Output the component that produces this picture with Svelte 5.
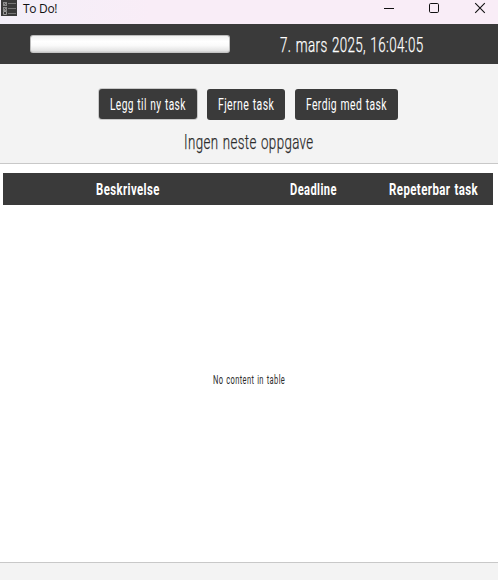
<script>
  const buttons = [
    { text: 'Legg til ny task', w: 76, box: 98, focused: true },
    { text: 'Fjerne task', w: 56, box: 78 },
    { text: 'Ferdig med task', w: 81, box: 103 }
  ];
  const columns = [
    { text: 'Beskrivelse', w: 64, box: 249 },
    { text: 'Deadline', w: 46.5, box: 122 },
    { text: 'Repeterbar task', w: 89, box: 119 }
  ];

  // Condenses a line of text horizontally until it fills the given width.
  function condense(node, width) {
    const fit = () => {
      node.style.transform = `scaleX(${width / node.offsetWidth})`;
    };
    fit();
    document.fonts.ready.then(fit);
  }
</script>

{#snippet label(text, width)}
  <span class="label" style:width="{width}px"><span class="glyphs" use:condense={width}>{text}</span></span>
{/snippet}

<div class="window">
  <header class="titlebar">
    <svg class="appicon" width="17" height="16" viewBox="0 0 17 16">
      <path fill="#3a3a3a" d="M1 0h16v16H1z" />
      <path fill="#8c8c8c" d="M3 2h4v4H3zM3 7h4v4H3z" />
      <path fill="#555" d="M4 3h1v1H4zM5 4h1v1H5zM4 8h1v1H4zM5 9h1v1H5z" />
      <path fill="none" stroke="#999" d="M3.5 11.5h3v3h-3z" />
      <path stroke="#777" d="M8 3.5h8M8 8.5h8M8 13.5h8" />
    </svg>
    <span class="title">To Do!</span>
    <svg class="controls" width="110" height="18" viewBox="0 0 110 18" fill="none" stroke="#111">
      <path d="M0 8.5h10" />
      <rect x="45.5" y="3.5" width="9" height="9" rx="1.2" />
      <path d="M91.2 3.2l9.6 9.6M100.8 3.2l-9.6 9.6" stroke-width="1.1" />
    </svg>
  </header>

  <section class="status">
    <div class="progress"></div>
    <div class="date">{@render label('7. mars 2025, 16:04:05', 143.5)}</div>
  </section>

  <section class="actions">
    <div class="buttons">
      {#each buttons as b}
        <button class:focused={b.focused} style:width="{b.box}px">{@render label(b.text, b.w)}</button>
      {/each}
    </div>
    <div class="next">{@render label('Ingen neste oppgave', 129.5)}</div>
  </section>

  <main class="table">
    <div class="head">
      {#each columns as c}
        <div class="cell" style:width="{c.box}px">{@render label(c.text, c.w)}</div>
      {/each}
    </div>
    <div class="empty">{@render label('No content in table', 72)}</div>
  </main>
  <footer></footer>
</div>

<style>
  .window {
    width: 498px;
    height: 580px;
    display: flex;
    flex-direction: column;
    overflow: hidden;
    background: #f3f3f3;
    font-family: Roboto, 'Liberation Sans', sans-serif;
    color: #2c2c2c;
  }
  .label {
    display: flex;
    flex: none;
    letter-spacing: 0.6px;
    word-spacing: 1px;
  }
  .glyphs {
    display: block;
    flex: none;
    white-space: nowrap;
    transform-origin: 0 50%;
  }
  .titlebar {
    height: 24px;
    display: flex;
    align-items: flex-start;
    background: linear-gradient(90deg, #f3eff8, #f9edf7 30%);
    flex: none;
  }
  .title {
    margin-left: 6px;
    font: 12px/17px 'Open Sans', sans-serif;
    letter-spacing: -0.3px;
    color: #111;
    flex: 1;
  }
  .controls { margin-right: 4px; }
  .status {
    height: 40px;
    flex: none;
    display: flex;
    background: #3a3a3a;
    color: #fff;
  }
  .progress {
    box-sizing: border-box;
    width: 200px;
    height: 18px;
    margin: 11px 50px 0 30px;
    border: 1px solid #bdbdbd;
    border-bottom-color: #c4c4c4;
    border-radius: 3px;
    background: linear-gradient(#f1f1f1, #fff 35%, #fafafa 60%, #e2e2e2 94%, #c8c8c8);
  }
  .date {
    padding-top: 8px;
    font-size: 20.5px;
    line-height: 26px;
    font-weight: 300;
    -webkit-text-stroke: 0.25px currentColor;
  }
  .actions {
    box-sizing: border-box;
    height: 100px;
    flex: none;
    border-bottom: 1px solid #c8c8c8;
  }
  .buttons { display: flex; gap: 10px; padding: 25px 0 0 99px; }
  button {
    height: 31px;
    padding: 0;
    border: 0;
    border-radius: 3px;
    background: #3a3a3a;
    color: #fff;
    display: flex;
    justify-content: center;
    align-items: flex-start;
    font-family: inherit;
    font-size: 16.5px;
    line-height: 31px;
  }
  button.focused { height: 30px; box-shadow: 0 0 0 1px #c8c8c8; }
  .next {
    display: flex;
    padding: 9px 0 0 184px;
    font-size: 21px;
    line-height: 26px;
    font-weight: 300;
    -webkit-text-stroke: 0.25px currentColor;
  }
  .table {
    height: 398px;
    flex: none;
    display: flex;
    flex-direction: column;
    background: #fff;
  }
  .head {
    display: flex;
    height: 32px;
    margin: 9px 5px 0 3px;
    background: #3a3a3a;
    color: #fff;
    flex: none;
    font-size: 16.5px;
    line-height: 33px;
    font-weight: 700;
  }
  .cell { display: flex; justify-content: center; }
  .empty {
    flex: 1;
    display: flex;
    justify-content: center;
    padding: 166px 1px 0 0;
    font-size: 12px;
    line-height: 18px;
  }
  footer { flex: 1; border-top: 1px solid #c8c8c8; background: #f3f3f3; }
</style>
